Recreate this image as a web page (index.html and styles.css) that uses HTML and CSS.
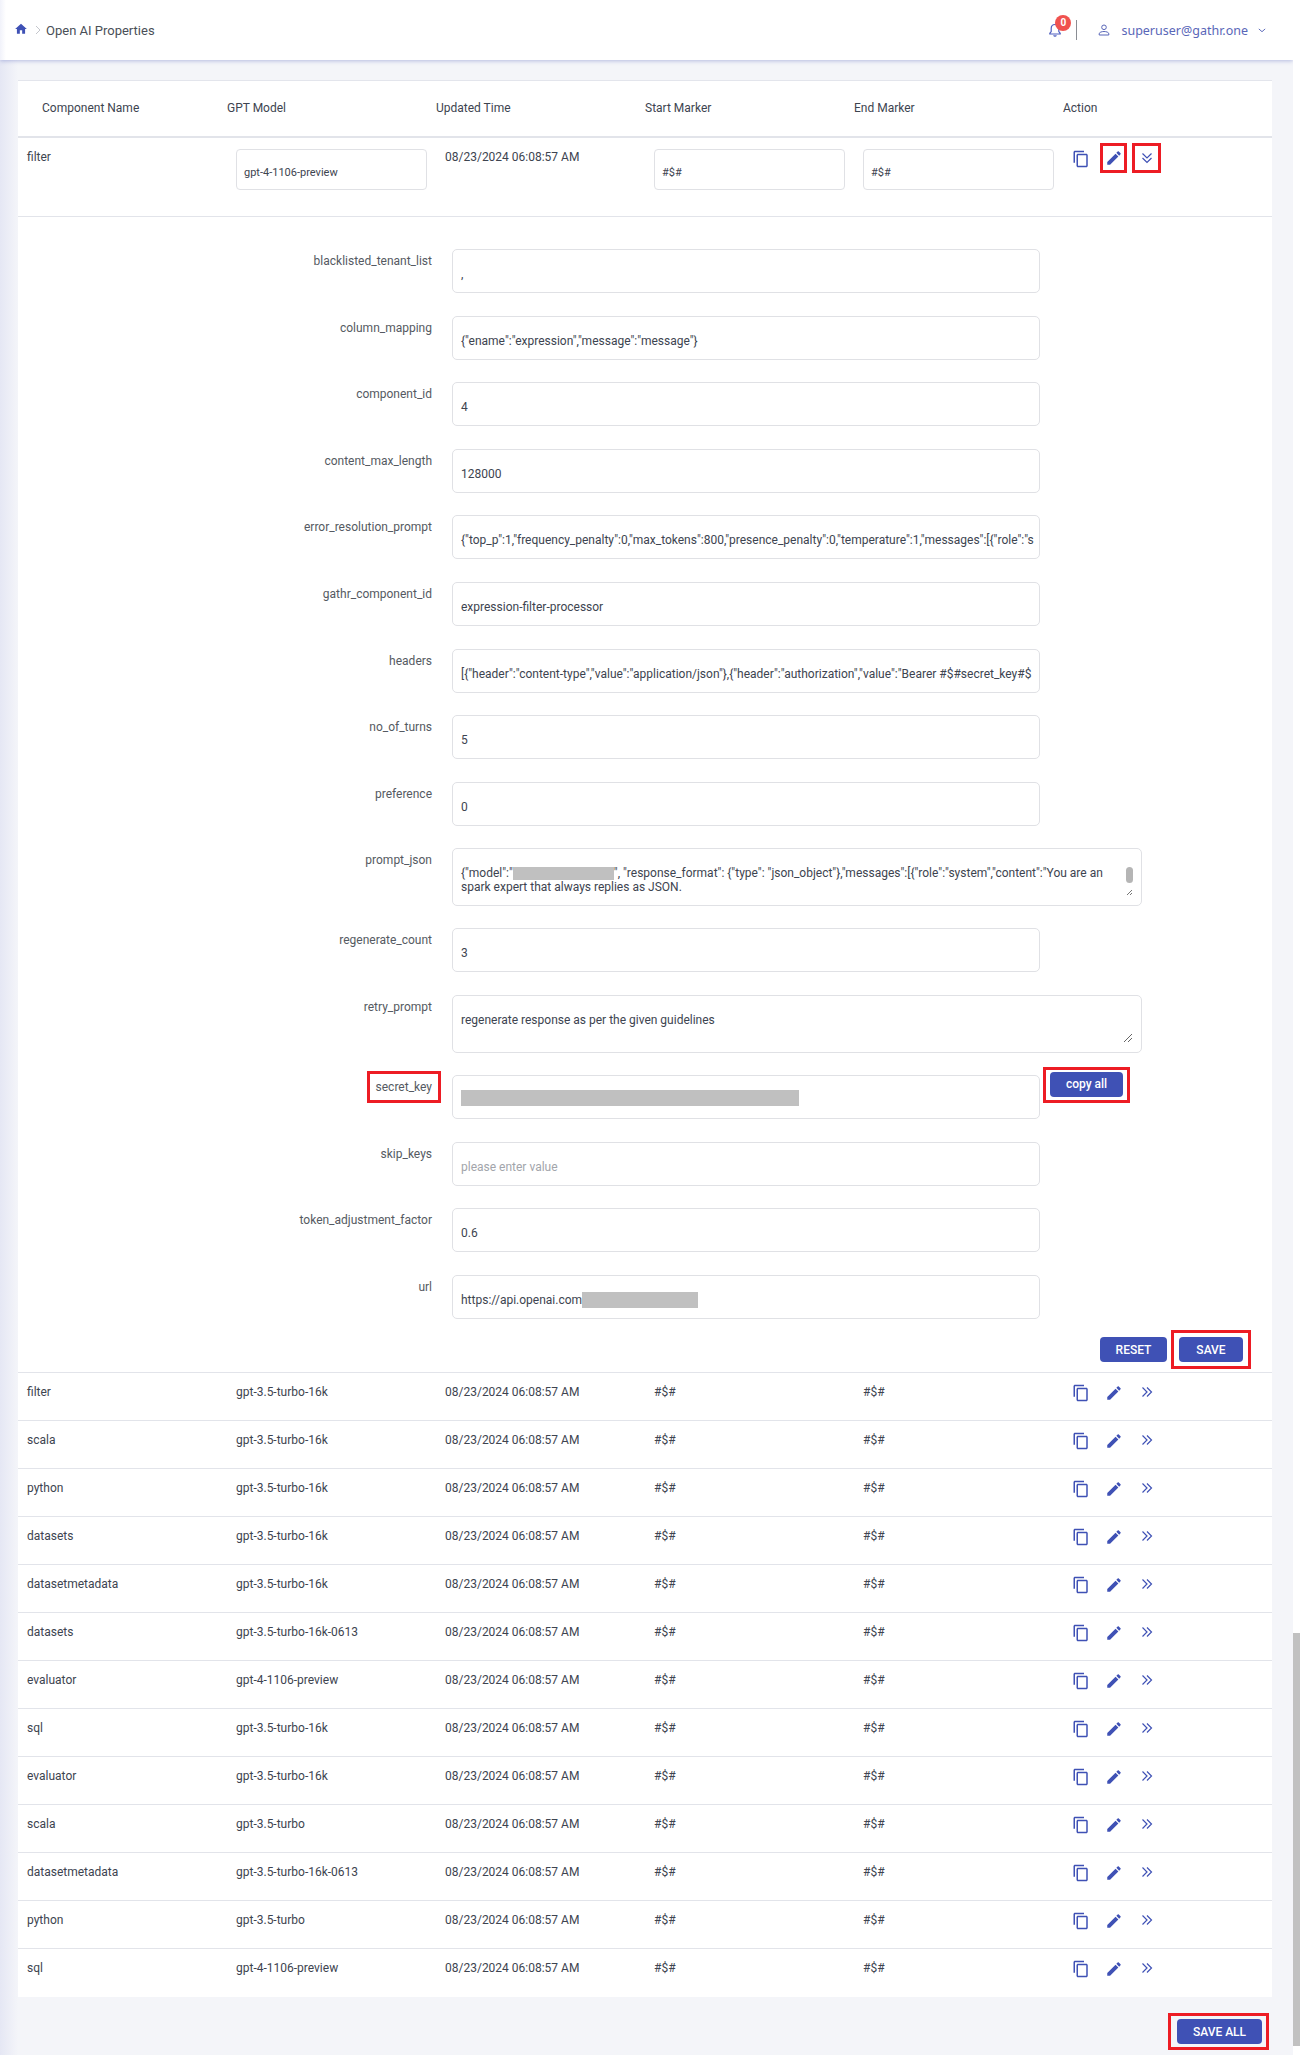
FILE: index.html
```html
<!DOCTYPE html>
<html lang="en">
<head>
<meta charset="utf-8">
<title>Open AI Properties</title>
<link rel="stylesheet" href="styles.css">
</head>
<body>
<svg class="defs" aria-hidden="true">
  <symbol id="i-copy" viewBox="0 0 24 24"><path d="M16 1H4c-1.1 0-2 .9-2 2v14h2V3h12V1zm3 4H8c-1.1 0-2 .9-2 2v14c0 1.1.9 2 2 2h11c1.1 0 2-.9 2-2V7c0-1.1-.9-2-2-2zm0 16H8V7h11v14z"/></symbol>
  <symbol id="i-edit" viewBox="0 0 24 24"><path d="M3 17.25V21h3.75L17.81 9.94l-3.75-3.75L3 17.25zM20.71 7.04c.39-.39.39-1.02 0-1.41l-2.34-2.34c-.39-.39-1.02-.39-1.41 0l-1.83 1.83 3.75 3.75 1.83-1.83z"/></symbol>
  <symbol id="i-right" viewBox="0 0 12 12"><path d="M1.500 1.500 6 6l-4.500 4.500M6 1.500 10.500 6 6 10.500" fill="none" stroke="currentColor" stroke-width="1.200"/></symbol>
  <symbol id="i-down" viewBox="0 0 12 12"><path d="M1.500 1.500 6 6l4.500-4.500M1.500 6 6 10.500 10.500 6" fill="none" stroke="currentColor" stroke-width="1.200"/></symbol>
</svg>
<div class="app">
  <div class="page">
    <header class="topbar">
      <nav class="crumbs">
        <svg class="home" viewBox="0 0 24 24"><path d="M10 20v-6h4v6h5v-8h3L12 3 2 12h3v8z"/></svg>
        <svg class="crumb-sep" viewBox="0 0 8 10"><path d="M2 1l4 4-4 4" fill="none" stroke="#c4c6cc" stroke-width="1"/></svg>
        <span>Open AI Properties</span>
      </nav>
      <div class="user-area">
        <span class="bell-wrap">
          <svg class="bell" viewBox="0 0 14 14"><path d="M7 1.500c-2.300 0-3.800 1.700-3.800 4v3L1.800 10.300v.7h10.400v-.7L10.800 8.500v-3c0-2.300-1.500-4-3.800-4zM5.700 12.200a1.400 1.400 0 0 0 2.600 0" fill="none" stroke="currentColor" stroke-width="1.200"/></svg>
          <span class="badge">0</span>
        </span>
        <span class="vline"></span>
        <svg class="user-icon" viewBox="0 0 12 12"><circle cx="6" cy="3.300" r="2.300" fill="none" stroke="currentColor"/><path d="M1.200 11v-1.200c0-1.500 2.600-2.300 4.800-2.300s4.800.8 4.800 2.300V11z" fill="none" stroke="currentColor"/></svg>
        <span class="user-name">superuser@gathr.one</span>
        <svg class="user-caret" viewBox="0 0 10 6"><path d="M1 1l4 3.500L9 1" fill="none" stroke="currentColor" stroke-width="1.200"/></svg>
      </div>
    </header>

    <main class="content">
      <section class="card">
        <div class="thead">
          <div class="th">Component Name</div>
          <div class="th">GPT Model</div>
          <div class="th">Updated Time</div>
          <div class="th">Start Marker</div>
          <div class="th">End Marker</div>
          <div class="th">Action</div>
        </div>

        <div class="row row-open">
          <div class="cell">filter</div>
          <div class="cell cell-input"><div class="mini-field">gpt-4-1106-preview</div></div>
          <div class="cell">08/23/2024 06:08:57 AM</div>
          <div class="cell cell-input"><div class="mini-field">#$#</div></div>
          <div class="cell cell-input"><div class="mini-field">#$#</div></div>
          <div class="cell cell-action">
            <svg class="ic ic-copy"><use href="#i-copy"/></svg>
            <span class="ic-mark ic-mark-edit"><svg class="ic"><use href="#i-edit"/></svg></span>
            <span class="ic-mark ic-mark-down"><svg class="ic-chev"><use href="#i-down"/></svg></span>
          </div>
        </div>

        <div class="detail">
          <div class="frow"><label class="flabel">blacklisted_tenant_list</label><div class="field">,</div></div>
          <div class="frow"><label class="flabel">column_mapping</label><div class="field">{"ename":"expression","message":"message"}</div></div>
          <div class="frow"><label class="flabel">component_id</label><div class="field">4</div></div>
          <div class="frow"><label class="flabel">content_max_length</label><div class="field">128000</div></div>
          <div class="frow"><label class="flabel">error_resolution_prompt</label><div class="field">{"top_p":1,"frequency_penalty":0,"max_tokens":800,"presence_penalty":0,"temperature":1,"messages":[{"role":"s</div></div>
          <div class="frow"><label class="flabel">gathr_component_id</label><div class="field">expression-filter-processor</div></div>
          <div class="frow"><label class="flabel">headers</label><div class="field">[{"header":"content-type","value":"application/json"},{"header":"authorization","value":"Bearer #$#secret_key#$</div></div>
          <div class="frow"><label class="flabel">no_of_turns</label><div class="field">5</div></div>
          <div class="frow"><label class="flabel">preference</label><div class="field">0</div></div>
          <div class="frow frow-area"><label class="flabel">prompt_json</label>
            <div class="field field-area">{"model":"<span class="redact redact-model"></span>", "response_format": {"type": "json_object"},"messages":[{"role":"system","content":"You are an<br>spark expert that always replies as JSON.
              <span class="area-thumb"></span>
              <svg class="grip grip-small" viewBox="0 0 8 8"><path d="M7 2 2 7M7 5 5 7" stroke="#777" fill="none"/></svg>
            </div>
          </div>
          <div class="frow"><label class="flabel">regenerate_count</label><div class="field">3</div></div>
          <div class="frow frow-area"><label class="flabel">retry_prompt</label>
            <div class="field field-area">regenerate response as per the given guidelines
              <svg class="grip" viewBox="0 0 10 10"><path d="M9 1 1 9M9 5 5 9" stroke="#666" fill="none"/></svg>
            </div>
          </div>
          <div class="frow"><label class="flabel"><span class="mark-label">secret_key</span></label>
            <div class="field"><span class="redact redact-key"></span></div>
            <div class="copy-mark"><button class="btn btn-copy" type="button">copy all</button></div>
          </div>
          <div class="frow"><label class="flabel">skip_keys</label><div class="field field-empty">please enter value</div></div>
          <div class="frow"><label class="flabel">token_adjustment_factor</label><div class="field">0.6</div></div>
          <div class="frow"><label class="flabel">url</label><div class="field">https://api.openai.com<span class="redact redact-url"></span></div></div>
          <div class="form-actions">
            <button class="btn btn-reset" type="button">RESET</button>
            <span class="save-mark"><button class="btn btn-save" type="button">SAVE</button></span>
          </div>
        </div>

        <div class="row"><div class="cell">filter</div><div class="cell">gpt-3.5-turbo-16k</div><div class="cell">08/23/2024 06:08:57 AM</div><div class="cell">#$#</div><div class="cell">#$#</div><div class="cell cell-action"><svg class="ic ic-copy"><use href="#i-copy"/></svg><svg class="ic ic-edit"><use href="#i-edit"/></svg><svg class="ic-chev"><use href="#i-right"/></svg></div></div>
        <div class="row"><div class="cell">scala</div><div class="cell">gpt-3.5-turbo-16k</div><div class="cell">08/23/2024 06:08:57 AM</div><div class="cell">#$#</div><div class="cell">#$#</div><div class="cell cell-action"><svg class="ic ic-copy"><use href="#i-copy"/></svg><svg class="ic ic-edit"><use href="#i-edit"/></svg><svg class="ic-chev"><use href="#i-right"/></svg></div></div>
        <div class="row"><div class="cell">python</div><div class="cell">gpt-3.5-turbo-16k</div><div class="cell">08/23/2024 06:08:57 AM</div><div class="cell">#$#</div><div class="cell">#$#</div><div class="cell cell-action"><svg class="ic ic-copy"><use href="#i-copy"/></svg><svg class="ic ic-edit"><use href="#i-edit"/></svg><svg class="ic-chev"><use href="#i-right"/></svg></div></div>
        <div class="row"><div class="cell">datasets</div><div class="cell">gpt-3.5-turbo-16k</div><div class="cell">08/23/2024 06:08:57 AM</div><div class="cell">#$#</div><div class="cell">#$#</div><div class="cell cell-action"><svg class="ic ic-copy"><use href="#i-copy"/></svg><svg class="ic ic-edit"><use href="#i-edit"/></svg><svg class="ic-chev"><use href="#i-right"/></svg></div></div>
        <div class="row"><div class="cell">datasetmetadata</div><div class="cell">gpt-3.5-turbo-16k</div><div class="cell">08/23/2024 06:08:57 AM</div><div class="cell">#$#</div><div class="cell">#$#</div><div class="cell cell-action"><svg class="ic ic-copy"><use href="#i-copy"/></svg><svg class="ic ic-edit"><use href="#i-edit"/></svg><svg class="ic-chev"><use href="#i-right"/></svg></div></div>
        <div class="row"><div class="cell">datasets</div><div class="cell">gpt-3.5-turbo-16k-0613</div><div class="cell">08/23/2024 06:08:57 AM</div><div class="cell">#$#</div><div class="cell">#$#</div><div class="cell cell-action"><svg class="ic ic-copy"><use href="#i-copy"/></svg><svg class="ic ic-edit"><use href="#i-edit"/></svg><svg class="ic-chev"><use href="#i-right"/></svg></div></div>
        <div class="row"><div class="cell">evaluator</div><div class="cell">gpt-4-1106-preview</div><div class="cell">08/23/2024 06:08:57 AM</div><div class="cell">#$#</div><div class="cell">#$#</div><div class="cell cell-action"><svg class="ic ic-copy"><use href="#i-copy"/></svg><svg class="ic ic-edit"><use href="#i-edit"/></svg><svg class="ic-chev"><use href="#i-right"/></svg></div></div>
        <div class="row"><div class="cell">sql</div><div class="cell">gpt-3.5-turbo-16k</div><div class="cell">08/23/2024 06:08:57 AM</div><div class="cell">#$#</div><div class="cell">#$#</div><div class="cell cell-action"><svg class="ic ic-copy"><use href="#i-copy"/></svg><svg class="ic ic-edit"><use href="#i-edit"/></svg><svg class="ic-chev"><use href="#i-right"/></svg></div></div>
        <div class="row"><div class="cell">evaluator</div><div class="cell">gpt-3.5-turbo-16k</div><div class="cell">08/23/2024 06:08:57 AM</div><div class="cell">#$#</div><div class="cell">#$#</div><div class="cell cell-action"><svg class="ic ic-copy"><use href="#i-copy"/></svg><svg class="ic ic-edit"><use href="#i-edit"/></svg><svg class="ic-chev"><use href="#i-right"/></svg></div></div>
        <div class="row"><div class="cell">scala</div><div class="cell">gpt-3.5-turbo</div><div class="cell">08/23/2024 06:08:57 AM</div><div class="cell">#$#</div><div class="cell">#$#</div><div class="cell cell-action"><svg class="ic ic-copy"><use href="#i-copy"/></svg><svg class="ic ic-edit"><use href="#i-edit"/></svg><svg class="ic-chev"><use href="#i-right"/></svg></div></div>
        <div class="row"><div class="cell">datasetmetadata</div><div class="cell">gpt-3.5-turbo-16k-0613</div><div class="cell">08/23/2024 06:08:57 AM</div><div class="cell">#$#</div><div class="cell">#$#</div><div class="cell cell-action"><svg class="ic ic-copy"><use href="#i-copy"/></svg><svg class="ic ic-edit"><use href="#i-edit"/></svg><svg class="ic-chev"><use href="#i-right"/></svg></div></div>
        <div class="row"><div class="cell">python</div><div class="cell">gpt-3.5-turbo</div><div class="cell">08/23/2024 06:08:57 AM</div><div class="cell">#$#</div><div class="cell">#$#</div><div class="cell cell-action"><svg class="ic ic-copy"><use href="#i-copy"/></svg><svg class="ic ic-edit"><use href="#i-edit"/></svg><svg class="ic-chev"><use href="#i-right"/></svg></div></div>
        <div class="row row-last"><div class="cell">sql</div><div class="cell">gpt-4-1106-preview</div><div class="cell">08/23/2024 06:08:57 AM</div><div class="cell">#$#</div><div class="cell">#$#</div><div class="cell cell-action"><svg class="ic ic-copy"><use href="#i-copy"/></svg><svg class="ic ic-edit"><use href="#i-edit"/></svg><svg class="ic-chev"><use href="#i-right"/></svg></div></div>
      </section>

      <div class="page-actions">
        <span class="saveall-mark"><button class="btn btn-saveall" type="button">SAVE ALL</button></span>
      </div>
    </main>
  </div>
  <div class="scrollbar"><div class="scroll-thumb"></div></div>
</div>
</body>
</html>
```
FILE: styles.css
```css
* { box-sizing: border-box; }
html, body { margin: 0; padding: 0; height: 2055px; overflow: hidden; }
body { font-family: Roboto, "Liberation Sans", sans-serif; font-size: 12px; color: #3d4450; background: #fff; }
.defs { width: 0; height: 0; display: block; overflow: hidden; }

.app { display: flex; height: 2055px; }
.page { width: 1293px; flex: none; background: linear-gradient(90deg, #e5e7f4 0, #f4f5f9 18px); }
.scrollbar { width: 7px; flex: none; background: #fff; }
.scroll-thumb { margin-top: 1633px; height: 413px; background: #c1c1c1; }

.topbar { height: 60px; background: linear-gradient(90deg, #f1f2fa 0, #fff 6px); display: flex; align-items: center; justify-content: space-between; box-shadow: 0 1px 4px rgba(63, 81, 181, .35); padding: 0 27px 0 14px; }
.crumbs { display: flex; align-items: center; font-size: 13px; color: #4a4f57; }
.home { width: 14px; height: 14px; fill: #3f51b5; margin-top: -2px; }
.crumb-sep { width: 8px; height: 10px; margin: 0 4px 0 6px; }
.user-area { display: flex; align-items: center; color: #5966b8; }
.bell-wrap { display: flex; position: relative; width: 14px; height: 14px; }
.bell { width: 14px; height: 14px; color: #4f5fc0; }
.badge { position: absolute; left: 7px; top: -8px; width: 16px; height: 16px; border-radius: 50%; background: #f0524f; color: #fff; font-size: 10px; font-weight: 700; line-height: 16px; text-align: center; }
.vline { width: 1px; height: 20px; background: #8a8d94; margin: 0 21px 0 14px; }
.user-icon { width: 12px; height: 12px; margin-right: 11px; color: #5966b8; }
.user-name { font-family: "Noto Sans", Roboto, sans-serif; font-size: 12.500px; }
.user-caret { width: 8px; height: 5px; margin-left: 10px; color: #5966b8; }

.content { padding: 20px 21px 0 18px; }
.card { background: #fff; border-top: 1px solid #e3e5ec; }

.thead, .row { display: grid; grid-template-columns: 209px 209px 209px 209px 199px 219px; padding-left: 9px; }
.thead { height: 57px; border-bottom: 2px solid #e2e4ea; padding-left: 24px; grid-template-columns: 185px 209px 209px 209px 209px 233px; }
.th { line-height: 55px; color: #3d4450; }

.row { height: 48px; border-bottom: 1px solid #e2e4ea; }
.row-last { border-bottom: 0; }
.cell { padding-top: 12px; line-height: 14px; white-space: nowrap; }
.cell-action { display: flex; align-items: flex-start; padding-top: 11px; }

.ic { width: 18px; height: 18px; fill: #3f51b5; flex: none; display: block; }
.ic-copy { margin-left: 10px; }
.ic-edit { margin-left: 15px; }
.ic-chev { width: 12px; height: 12px; color: #3f51b5; flex: none; display: block; margin: 2px 0 0 18px; }

.row-open { height: 79px; }
.row-open .cell-input { padding-top: 11px; }
.mini-field { width: 191px; height: 41px; border: 1px solid #e0e1e5; border-radius: 4px; padding: 16px 7px 0; font-size: 11px; color: #3d4450; line-height: 14px; }
.row-open .cell-action { padding-top: 5px; }
.row-open .ic-copy { margin-top: 7px; margin-right: 10px; }
.ic-mark { width: 27px; height: 30px; border: 3px solid #ed1c24; display: flex; align-items: center; justify-content: center; flex: none; }
.ic-mark-down { width: 29px; margin-left: 5px; }
.ic-mark-down .ic-chev { margin: 0; }

.detail { padding-top: 32px; border-bottom: 1px solid #e2e4ea; height: 1156px; }
.frow { display: grid; grid-template-columns: 414px 608px 102px; height: 44px; margin-bottom: 22.600px; }
.frow-area { height: 58px; margin-bottom: 22px; }
.flabel { text-align: right; padding-top: 5px; line-height: 14px; color: #555a62; }
.field { position: relative; margin-left: 20px; border: 1px solid #e0e1e5; border-radius: 5px; padding: 17px 8px 0; line-height: 14px; white-space: nowrap; overflow: hidden; color: #3d4450; }
.field-area { grid-column: 2 / 4; white-space: normal; padding-top: 17px; padding-right: 20px; }
.field-empty { color: #a2a5ab; }
.redact { display: inline-block; background: #c0c0c0; vertical-align: top; }
.redact-model { width: 101px; height: 13px; margin-top: 1px; }
.redact-key { width: 338px; height: 16px; margin-top: -3px; }
.redact-url { width: 116px; height: 16px; margin-top: -1px; }
.area-thumb { position: absolute; right: 8px; top: 18px; width: 7px; height: 16px; border-radius: 4px; background: #b5b5b5; }
.grip { position: absolute; right: 8px; bottom: 9px; width: 10px; height: 10px; }
.grip-small { right: 8px; bottom: 9px; width: 8px; height: 8px; }

.mark-label { outline: 3px solid #ed1c24; outline-offset: 6px; }
.copy-mark { margin: -8px 0 0 3px; align-self: start; width: 87px; height: 36px; border: 3px solid #ed1c24; padding: 2px 4px; }

.btn { display: block; border: 0; border-radius: 4px; background: #3f51b5; color: #fff; font-family: Roboto, "Liberation Sans", sans-serif; font-size: 12px; font-weight: 500; padding: 0; height: 25px; }
.btn-copy { width: 73px; }
.btn-reset { width: 67px; }
.btn-save { width: 64px; }
.btn-saveall { width: 85px; }

.form-actions { display: flex; align-items: center; justify-content: flex-end; gap: 4px; margin-top: -11px; padding-right: 21px; }
.save-mark { border: 3px solid #ed1c24; padding: 4px 5px; display: block; }

.page-actions { display: flex; justify-content: flex-end; padding: 16px 3px 0 0; }
.saveall-mark { display: block; border: 3px solid #ed1c24; padding: 3px 4px 3px 6px; }
```
